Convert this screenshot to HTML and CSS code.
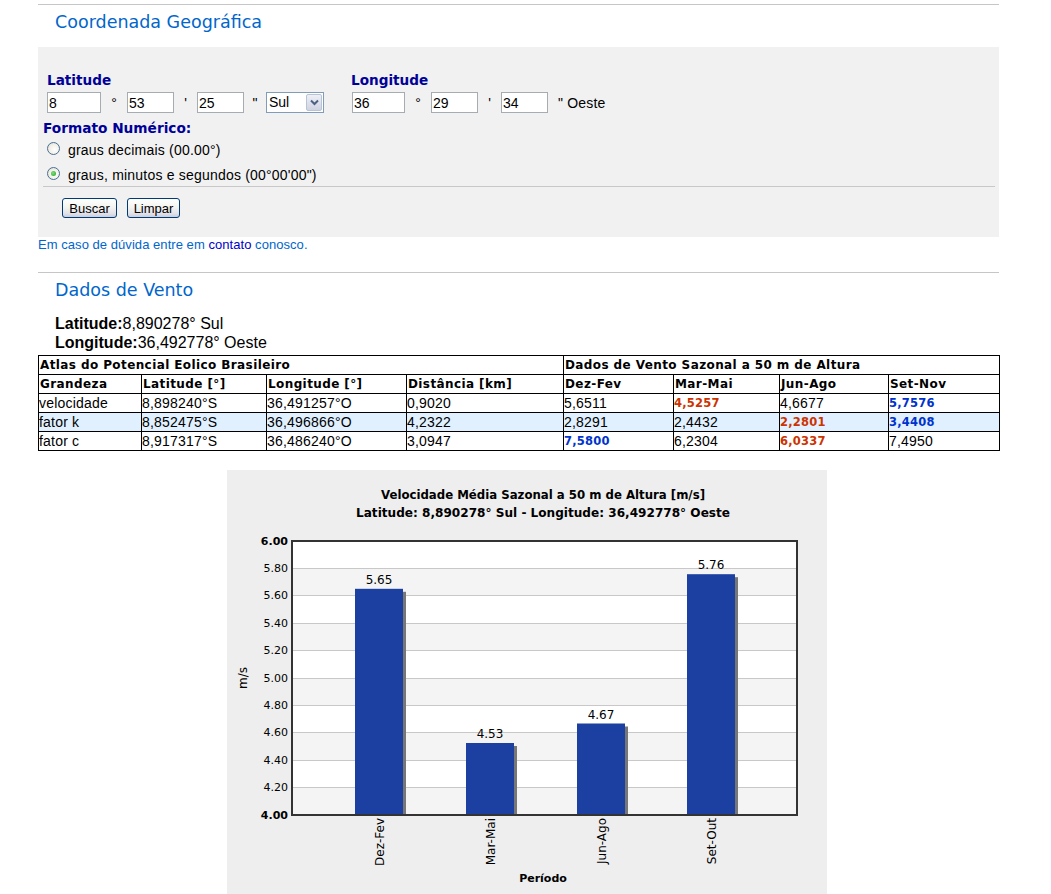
FILE: index.html
```html
<!DOCTYPE html>
<html lang="pt-BR">
<head>
<meta charset="utf-8">
<title>Dados de Vento</title>
<link rel="stylesheet" href="styles.css">
</head>
<body>
<div class="page">
  <div class="rule"></div>
  <h2 class="section-title">Coordenada Geográfica</h2>
  <form class="panel">
    <div class="coords">
      <div class="coord coord-lat">
        <div class="coord-label">Latitude</div>
        <div class="coord-fields">
          <input class="field f-deg" type="text" value="8">
          <span class="unit u-deg">°</span>
          <input class="field f-min" type="text" value="53">
          <span class="unit u-min">'</span>
          <input class="field f-sec" type="text" value="25">
          <span class="unit u-sec">"</span>
          <span class="select">
            <span class="select-value">Sul</span>
            <span class="select-btn">
              <svg width="9" height="7" viewBox="0 0 9 7"><path d="M1 1.5 L4.5 5 L8 1.5" fill="none" stroke="#4d6185" stroke-width="2"/></svg>
            </span>
          </span>
        </div>
      </div>
      <div class="coord coord-lon">
        <div class="coord-label">Longitude</div>
        <div class="coord-fields">
          <input class="field f-deg2" type="text" value="36">
          <span class="unit u-deg">°</span>
          <input class="field f-min" type="text" value="29">
          <span class="unit u-min">'</span>
          <input class="field f-sec" type="text" value="34">
          <span class="unit u-west">" Oeste</span>
        </div>
      </div>
    </div>
    <div class="format-label">Formato Numérico:</div>
    <label class="radio"><span class="radio-mark"></span>graus decimais (00.00°)</label>
    <label class="radio"><span class="radio-mark checked"></span>graus, minutos e segundos (00°00'00")</label>
    <div class="panel-rule"></div>
    <div class="buttons">
      <button type="button" class="btn btn-search">Buscar</button>
      <button type="button" class="btn btn-clear">Limpar</button>
    </div>
  </form>
  <p class="help">Em caso de dúvida entre em <a class="help-link">contato</a> conosco.</p>
  <div class="rule rule-2"></div>
  <h2 class="section-title">Dados de Vento</h2>
  <div class="position">
    <div><b>Latitude:</b>8,890278° Sul</div>
    <div><b>Longitude:</b>36,492778° Oeste</div>
  </div>
  <table class="wind">
    <colgroup>
      <col class="c1"><col class="c2"><col class="c3"><col class="c4">
      <col class="c5"><col class="c6"><col class="c7"><col class="c8">
    </colgroup>
    <tr class="head"><th colspan="4">Atlas do Potencial Eolico Brasileiro</th><th colspan="4">Dados de Vento Sazonal a 50 m de Altura</th></tr>
    <tr class="head"><th>Grandeza</th><th>Latitude [°]</th><th>Longitude [°]</th><th>Distância [km]</th><th>Dez-Fev</th><th>Mar-Mai</th><th>Jun-Ago</th><th>Set-Nov</th></tr>
    <tr><td>velocidade</td><td>8,898240°S</td><td>36,491257°O</td><td>0,9020</td><td>5,6511</td><td class="min">4,5257</td><td>4,6677</td><td class="max">5,7576</td></tr>
    <tr class="alt"><td>fator k</td><td>8,852475°S</td><td>36,496866°O</td><td>4,2322</td><td>2,8291</td><td>2,4432</td><td class="min">2,2801</td><td class="max">3,4408</td></tr>
    <tr><td>fator c</td><td>8,917317°S</td><td>36,486240°O</td><td>3,0947</td><td class="max">7,5800</td><td>6,2304</td><td class="min">6,0337</td><td>7,4950</td></tr>
  </table>
  <div class="chart">
    <svg width="600" height="424" viewBox="0 0 600 424">
      <rect x="0" y="0" width="600" height="424" fill="#eeeeee"/>
      <text class="ct-title" x="316" y="29" text-anchor="middle" textLength="324" lengthAdjust="spacingAndGlyphs">Velocidade Média Sazonal a 50 m de Altura [m/s]</text>
      <text class="ct-title" x="316" y="47" text-anchor="middle" textLength="374" lengthAdjust="spacingAndGlyphs">Latitude: 8,890278° Sul - Longitude: 36,492778° Oeste</text>
      <rect x="65" y="71" width="505" height="274" fill="#ffffff"/>
      <rect x="65" y="98" width="505" height="27" fill="#f4f4f4"/>
      <rect x="65" y="153" width="505" height="27" fill="#f4f4f4"/>
      <rect x="65" y="208" width="505" height="27" fill="#f4f4f4"/>
      <rect x="65" y="262" width="505" height="28" fill="#f4f4f4"/>
      <rect x="65" y="317" width="505" height="28" fill="#f4f4f4"/>
      <g stroke="#c8c8c8" stroke-width="1">
        <line x1="65" y1="98.5" x2="570" y2="98.5"/>
        <line x1="65" y1="125.5" x2="570" y2="125.5"/>
        <line x1="65" y1="153.5" x2="570" y2="153.5"/>
        <line x1="65" y1="180.5" x2="570" y2="180.5"/>
        <line x1="65" y1="208.5" x2="570" y2="208.5"/>
        <line x1="65" y1="235.5" x2="570" y2="235.5"/>
        <line x1="65" y1="262.5" x2="570" y2="262.5"/>
        <line x1="65" y1="290.5" x2="570" y2="290.5"/>
        <line x1="65" y1="317.5" x2="570" y2="317.5"/>
      </g>
      <g fill="#777777">
        <rect x="131" y="121.8" width="48" height="223.2"/>
        <rect x="242" y="276" width="48" height="69"/>
        <rect x="353" y="256.5" width="48" height="88.5"/>
        <rect x="463" y="107.2" width="48" height="237.8"/>
      </g>
      <g fill="#1b40a2">
        <rect x="128" y="118.8" width="48" height="226.2"/>
        <rect x="239" y="273" width="48" height="72"/>
        <rect x="350" y="253.5" width="48" height="91.5"/>
        <rect x="460" y="104.2" width="48" height="240.8"/>
      </g>
      <g class="ct-val" text-anchor="middle">
        <text x="152" y="113.8">5.65</text>
        <text x="263" y="268">4.53</text>
        <text x="374" y="248.5">4.67</text>
        <text x="484" y="99.2">5.76</text>
      </g>
      <rect x="65" y="71" width="505" height="274" fill="none" stroke="#333333" stroke-width="2"/>
      <g class="ct-tick" text-anchor="end">
        <text class="ct-bold" x="61" y="75">6.00</text>
        <text x="61" y="102">5.80</text>
        <text x="61" y="129">5.60</text>
        <text x="61" y="157">5.40</text>
        <text x="61" y="184">5.20</text>
        <text x="61" y="212">5.00</text>
        <text x="61" y="239">4.80</text>
        <text x="61" y="266">4.60</text>
        <text x="61" y="294">4.40</text>
        <text x="61" y="321">4.20</text>
        <text class="ct-bold" x="61" y="349">4.00</text>
      </g>
      <text class="ct-axis" transform="translate(20,208) rotate(-90)" text-anchor="middle">m/s</text>
      <g class="ct-cat" text-anchor="end">
        <text transform="translate(157,348) rotate(-90)">Dez-Fev</text>
        <text transform="translate(267.5,348) rotate(-90)">Mar-Mai</text>
        <text transform="translate(379,348) rotate(-90)">Jun-Ago</text>
        <text transform="translate(489,348) rotate(-90)">Set-Out</text>
      </g>
      <text class="ct-xtitle" x="316" y="412" text-anchor="middle">Período</text>
    </svg>
  </div>
</div>
</body>
</html>
```

FILE: styles.css
```css
* { box-sizing: border-box; }

html, body {
  margin: 0;
  padding: 0;
  background: #ffffff;
}

body {
  font-family: "Liberation Sans", Arial, sans-serif;
  font-size: 14px;
  color: #000000;
}

.page {
  width: 961px;
  margin-left: 38px;
  padding-top: 4px;
}

.rule {
  height: 1px;
  background: #c6c6c6;
}

.rule-2 {
  margin-top: 19px;
}

.section-title {
  margin: 7px 0 0 17px;
  font-family: "DejaVu Sans", Verdana, sans-serif;
  font-weight: normal;
  font-size: 17.5px;
  line-height: 21px;
  color: #0066cc;
}

/* ---------- form panel ---------- */
.panel {
  margin: 14px 0 0 0;
  background: #f1f1f1;
  padding: 25px 4px 19px 5px;
}

.coords {
  display: flex;
  margin-left: 4px;
}

.coord-lat { width: 304px; }

.coord-label {
  font-family: "DejaVu Sans", Verdana, sans-serif;
  font-weight: bold;
  font-size: 13.6px;
  line-height: 16px;
  color: #000099;
}

.coord-fields {
  display: flex;
  align-items: center;
  margin-top: 4px;
  height: 21px;
}

.field {
  height: 21px;
  margin: 0;
  padding: 0 1px;
  border: 1px solid #a5acb2;
  background: #ffffff;
  font-family: "Liberation Sans", Arial, sans-serif;
  font-size: 14px;
  color: #000000;
  outline: none;
}

.f-deg { width: 54px; margin-left: 0; }
.f-deg2 { width: 53px; margin-left: 1px; }
.f-min { width: 47px; }
.f-sec { width: 47px; }

.unit {
  font-size: 14px;
  text-align: center;
  color: #000000;
}

.u-deg { width: 26px; }
.u-min { width: 23px; }
.u-sec { width: 22px; }
.u-west { margin-left: 10px; letter-spacing: 0.2px; }

.select {
  display: flex;
  align-items: stretch;
  width: 58px;
  height: 21px;
  border: 1px solid #7f9db9;
  background: #ffffff;
  padding: 1px;
}

.select-value {
  flex: 1;
  font-size: 14px;
  line-height: 17px;
  padding-left: 1px;
}

.select-btn {
  width: 16px;
  display: flex;
  align-items: center;
  justify-content: center;
  border: 1px solid #b9c3d6;
  border-radius: 2px;
  background: linear-gradient(#eef0f6, #cfd3e2);
}

.format-label {
  margin: 7px 0 0 0;
  font-family: "DejaVu Sans", Verdana, sans-serif;
  font-weight: bold;
  font-size: 13.7px;
  line-height: 16px;
  color: #000099;
}

.radio {
  display: flex;
  align-items: center;
  margin: 3px 0 0 4px;
  height: 22px;
  font-size: 14px;
  letter-spacing: 0.2px;
  line-height: 22px;
  color: #000000;
}

.radio-mark {
  width: 13px;
  height: 13px;
  margin: 0 8px 3px 0;
  border-radius: 50%;
  border: 1px solid #4a6f95;
  background: radial-gradient(circle at 60% 60%, #ffffff 0%, #f1efe6 55%, #d6d4cc 100%);
  display: flex;
  align-items: center;
  justify-content: center;
}

.radio-mark.checked::after {
  content: "";
  width: 5px;
  height: 5px;
  border-radius: 50%;
  background: radial-gradient(circle at 40% 40%, #7ee07e, #21a121);
}

.panel-rule {
  height: 1px;
  background: #c8c8c8;
}

.buttons {
  display: flex;
  gap: 10px;
  margin: 11px 0 0 19px;
}

.btn {
  height: 20px;
  margin: 0;
  padding: 0;
  font-family: "Liberation Sans", Arial, sans-serif;
  font-size: 13px;
  color: #000000;
  border: 1px solid #003c74;
  border-radius: 3px;
  background: linear-gradient(#ffffff 0%, #f4f4f0 45%, #e2e2ea 80%, #cdcddc 100%);
}

.btn-search { width: 55px; }
.btn-clear { width: 53px; }

.help {
  margin: 0;
  font-size: 13px;
  letter-spacing: 0.05px;
  line-height: 16px;
  color: #0066cc;
}

.help-link {
  color: #0000cc;
  text-decoration: none;
}

/* ---------- position ---------- */
.position {
  margin: 13px 0 0 17px;
  font-size: 16px;
  line-height: 19px;
}

/* ---------- table ---------- */
.wind {
  margin-top: 3px;
  width: 961px;
  border-collapse: collapse;
  table-layout: fixed;
  border: 1px solid #000000;
}

.c1 { width: 103px; }
.c2 { width: 125px; }
.c3 { width: 140px; }
.c4 { width: 157px; }
.c5 { width: 110px; }
.c6 { width: 106px; }
.c7 { width: 109px; }
.c8 { width: 111px; }

.wind th,
.wind td {
  border: 1px solid #000000;
  height: 19px;
  padding: 0 1px;
  text-align: left;
  white-space: nowrap;
  overflow: hidden;
}

.wind th {
  font-family: "DejaVu Sans", Verdana, sans-serif;
  font-weight: bold;
  font-size: 12px;
  letter-spacing: 0.4px;
  line-height: 17px;
}

.wind td {
  font-size: 14px;
  letter-spacing: 0.2px;
  line-height: 17px;
  padding-left: 0;
}

.wind tr.alt td { background: #e1f0ff; }

.wind td.min,
.wind td.max {
  font-family: "DejaVu Sans", Verdana, sans-serif;
  font-weight: bold;
  font-size: 11.5px;
  letter-spacing: 0.2px;
}

.wind td.min { color: #cc3300; }
.wind td.max { color: #0033cc; }

/* ---------- chart ---------- */
.chart {
  margin: 19px 0 0 189px;
  width: 600px;
  height: 424px;
}

.chart svg { display: block; }

.ct-title {
  font-family: "DejaVu Sans", Verdana, sans-serif;
  font-weight: bold;
  font-size: 12px;
  fill: #000000;
}

.ct-tick {
  font-family: "DejaVu Sans", Verdana, sans-serif;
  font-size: 11px;
  fill: #000000;
}

.ct-val,
.ct-cat {
  font-family: "DejaVu Sans", Verdana, sans-serif;
  font-size: 12px;
  fill: #000000;
}

.ct-bold { font-weight: bold; }

.ct-axis {
  font-family: "DejaVu Sans", Verdana, sans-serif;
  font-size: 12px;
  fill: #000000;
}

.ct-xtitle {
  font-family: "DejaVu Sans", Verdana, sans-serif;
  font-weight: bold;
  font-size: 11px;
  fill: #000000;
}
```
